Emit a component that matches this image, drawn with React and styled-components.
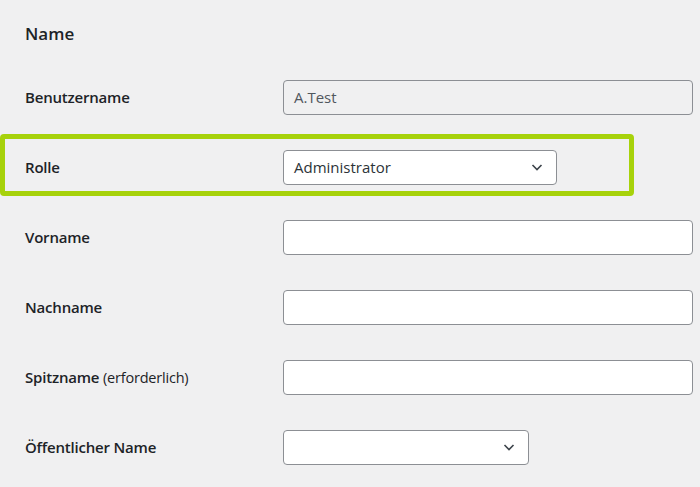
import React from 'react';
import styled, { createGlobalStyle } from 'styled-components';

const Global = createGlobalStyle`
  body {
    margin: 0;
    background: #f0f0f1;
    font-family: "Open Sans", "Noto Sans", sans-serif;
    color: #1d2327;
  }
`;

const Page = styled.div`
  display: flex;
  flex-direction: column;
  width: 700px;
`;

const Heading = styled.h2`
  margin: 0;
  height: 62px;
  padding-left: 25px;
  display: flex;
  align-items: center;
  font-size: 17px;
  font-weight: 600;
  padding-top: 4px;
  box-sizing: border-box;
`;

const Row = styled.div`
  display: flex;
  align-items: center;
  box-sizing: border-box;
  height: ${p => (p.$highlight ? '62px' : '70px')};
  width: ${p => (p.$highlight ? '634px' : '700px')};
  margin: ${p => (p.$highlight ? '2px 0 6px' : '0')};
  padding: ${p => (p.$highlight ? '4px 0 0 20px' : '0 0 0 25px')};
  border: ${p => (p.$highlight ? '5px solid #a7d20b' : 'none')};
  border-radius: 4px;
`;

const Label = styled.label`
  width: 258px;
  flex-shrink: 0;
  font-size: 15px;
  font-weight: 600;
  letter-spacing: -0.2px;
`;

const Hint = styled.span`
  font-size: 14.5px;
  font-weight: 400;
`;

const Input = styled.div`
  box-sizing: border-box;
  width: ${p => p.$width || 410}px;
  height: 35px;
  border: 1px solid #8c8f94;
  border-radius: 4px;
  background: ${p => (p.$disabled ? '#f0f0f1' : '#fff')};
  display: flex;
  align-items: center;
  justify-content: space-between;
  padding: 0 12px 0 10px;
  font-size: 15px;
  color: ${p => (p.$disabled ? '#50575e' : '#2c3338')};
`;

const Chevron = () => (
  <svg width="14" height="14" viewBox="0 0 14 14" fill="none" stroke="#3c434a" strokeWidth="1.6">
    <path d="M2.5 5l4.5 4.5L11.5 5" />
  </svg>
);

export default function App() {
  return (
    <Page>
      <Global />
      <Heading>Name</Heading>
      <Row>
        <Label>Benutzername</Label>
        <Input $disabled>A.Test</Input>
      </Row>
      <Row $highlight>
        <Label>Rolle</Label>
        <Input $width={274}>Administrator<Chevron /></Input>
      </Row>
      <Row>
        <Label>Vorname</Label>
        <Input />
      </Row>
      <Row>
        <Label>Nachname</Label>
        <Input />
      </Row>
      <Row>
        <Label>Spitzname <Hint>(erforderlich)</Hint></Label>
        <Input />
      </Row>
      <Row>
        <Label>Öffentlicher Name</Label>
        <Input $width={246}><span /><Chevron /></Input>
      </Row>
    </Page>
  );
}
